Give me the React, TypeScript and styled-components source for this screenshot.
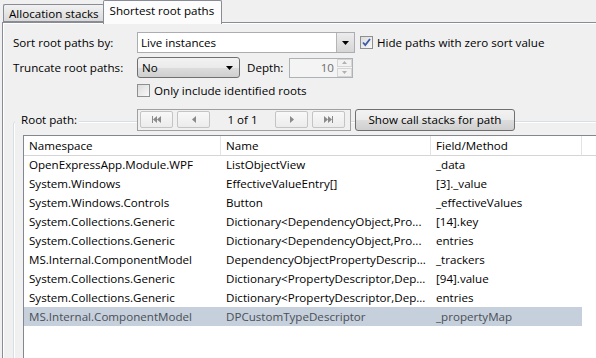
import styled, { createGlobalStyle } from "styled-components";

const GlobalStyle = createGlobalStyle`
  html, body {
    margin: 0;
    padding: 0;
    background: #f0f0f0;
  }
  body {
    font-family: "Open Sans", "Liberation Sans", sans-serif;
    font-size: 11.6px;
    color: #000;
  }
`;

const Window = styled.div`
  width: 596px;
  height: 358px;
  overflow: hidden;
  display: flex;
  flex-direction: column;
`;

const TabStrip = styled.div`
  display: flex;
  align-items: flex-end;
  height: 22px;
  padding-left: 3px;
  position: relative;
  z-index: 1;
`;

const Tab = styled.div<{ $active?: boolean }>`
  box-sizing: border-box;
  display: flex;
  align-items: center;
  border: 1px solid #898c95;
  border-radius: 2px 2px 0 0;
  white-space: nowrap;
  ${(p) =>
    p.$active
      ? `
    height: 24px;
    margin-bottom: -2px;
    margin-left: -1px;
    padding: 0 7px 4px 6px;
    border-bottom: none;
    background: #fcfcfc;
  `
      : `
    height: 18px;
    padding: 0 5px 0 5px;
    border-right: none;
    background: linear-gradient(#f2f2f2, #d9d9d9);
  `}
`;

const Panel = styled.div`
  flex: none;
  height: 360px;
  width: 640px;
  margin-left: 2px;
  border-top: 1px solid #898c95;
  border-left: 1px solid #898c95;
  box-shadow: inset 1px 1px 0 #fff;
  padding: 9px 0 0 10px;
  display: flex;
  flex-direction: column;
`;

const FormRow = styled.div<{ $top?: number }>`
  display: flex;
  align-items: center;
  margin-top: ${(p) => p.$top ?? 0}px;
`;

const Label = styled.div<{ $width?: number; $left?: number }>`
  width: ${(p) => p.$width ?? 124}px;
  margin-left: ${(p) => p.$left ?? 0}px;
  flex: none;
  white-space: nowrap;
`;

const ComboField = styled.div`
  box-sizing: border-box;
  width: 218px;
  height: 21px;
  display: flex;
  border: 1px solid #abadb3;
  background: #fff;
`;

const ComboText = styled.div`
  flex: 1;
  padding-left: 3px;
  display: flex;
  align-items: center;
`;

const ComboArrow = styled.div`
  width: 17px;
  border-left: 1px solid #b5b5b5;
  background: linear-gradient(#ececec, #d6d6d6);
  display: flex;
  align-items: center;
  justify-content: center;
`;

const ButtonCombo = styled.div`
  box-sizing: border-box;
  width: 103px;
  height: 21px;
  display: flex;
  align-items: center;
  justify-content: space-between;
  padding: 0 6px 0 4px;
  border: 1px solid #707070;
  border-radius: 3px;
  background: linear-gradient(#f2f2f2 0%, #ebebeb 50%, #dddddd 51%, #cfcfcf 100%);
`;

const CheckLabel = styled.label<{ $left?: number }>`
  display: flex;
  align-items: center;
  gap: 4px;
  margin-left: ${(p) => p.$left ?? 0}px;
  white-space: nowrap;
`;

const CheckBox = styled.span`
  box-sizing: border-box;
  width: 13px;
  height: 13px;
  border: 1px solid #8e8f8f;
  background: linear-gradient(135deg, #dcdcdc, #f8f8f8);
  display: flex;
  align-items: center;
  justify-content: center;
`;

const Spinner = styled.div`
  box-sizing: border-box;
  width: 64px;
  height: 20px;
  display: flex;
  border: 1px solid #adb2b5;
  background: #f4f4f4;
  color: #6d6d6d;
`;

const SpinValue = styled.div`
  flex: 1;
  display: flex;
  align-items: center;
  justify-content: flex-end;
  padding-right: 3px;
`;

const SpinButtons = styled.div`
  width: 15px;
  display: flex;
  flex-direction: column;
  gap: 1px;
`;

const SpinButton = styled.div`
  flex: 1;
  border: 1px solid #d5d5d5;
  background: #f2f2f2;
  display: flex;
  align-items: center;
  justify-content: center;
`;

const GroupBox = styled.div`
  margin-top: 23px;
  flex: 1;
  border: 1px solid #d5dfe5;
  border-radius: 3px;
  box-shadow: inset 1px 1px 0 #fff;
  display: flex;
  flex-direction: column;
  padding-left: 9px;
`;

const GroupHeader = styled.div`
  display: flex;
  align-items: center;
  height: 23px;
  margin-top: -14px;
  margin-left: -9px;
`;

const GroupTitle = styled.div`
  width: 123px;
  flex: none;
  span {
    background: #f0f0f0;
    padding: 0 2px 0 6px;
    margin-left: 1px;
  }
`;

const Navigator = styled.div`
  box-sizing: border-box;
  width: 214px;
  height: 22px;
  display: flex;
  align-items: center;
  padding: 0 2px;
  gap: 4px;
  border: 1px solid #a0a0a0;
  background: #f0f0f0;
`;

const NavButton = styled.div`
  box-sizing: border-box;
  width: 33px;
  height: 17px;
  border: 1px solid #c4c4c4;
  border-radius: 2px;
  background: linear-gradient(#f8f8f8, #ececec);
  display: flex;
  align-items: center;
  justify-content: center;
`;

const PageText = styled.div`
  width: 57px;
  text-align: center;
`;

const PushButton = styled.div`
  box-sizing: border-box;
  width: 160px;
  height: 22px;
  margin-left: 4px;
  display: flex;
  align-items: center;
  justify-content: center;
  border: 1px solid #707070;
  border-radius: 3px;
  background: linear-gradient(#f2f2f2 0%, #ebebeb 50%, #dddddd 51%, #cfcfcf 100%);
`;

const Table = styled.div`
  margin-top: 4px;
  flex: 1;
  border: 1px solid #828790;
  background: #fff;
  display: grid;
  grid-template-columns: 197px 210px 151px 1fr;
  grid-auto-rows: 19px;
  align-content: start;
`;

const HeaderCell = styled.div<{ $last?: boolean }>`
  height: 20px;
  box-sizing: border-box;
  display: flex;
  align-items: center;
  padding-left: 5px;
  border-bottom: 1px solid #d5d5d5;
  border-right: ${(p) => (p.$last ? "none" : "1px solid #e3e3e3")};
  margin-bottom: 1px;
`;

const Cell = styled.div<{ $selected?: boolean; $fill?: boolean }>`
  display: flex;
  align-items: center;
  padding-left: 5px;
  white-space: nowrap;
  overflow: hidden;
  background: ${(p) => (p.$selected && !p.$fill ? "#c5d0dc" : "transparent")};
  color: ${(p) => (p.$selected ? "#4a4f55" : "#000")};
`;

const DownArrow = () => (
  <svg width="7" height="4" viewBox="0 0 7 4">
    <path d="M0 0h7L3.5 4z" fill="#000" />
  </svg>
);

const Check = () => (
  <svg width="9" height="9" viewBox="0 0 9 9">
    <path d="M1 4.5l2.3 2.6L8 1" fill="none" stroke="#3b5aa8" strokeWidth="1.8" />
  </svg>
);

const Tri = ({ up }: { up?: boolean }) => (
  <svg width="5" height="3" viewBox="0 0 5 3">
    <path d={up ? "M0 3h5L2.5 0z" : "M0 0h5L2.5 3z"} fill="#b0b0b0" />
  </svg>
);

const NavIcon = ({ kind }: { kind: "first" | "prev" | "next" | "last" }) => {
  const c = "#8a8a8a";
  switch (kind) {
    case "first":
      return (
        <svg width="9" height="7" viewBox="0 0 9 7">
          <rect x="0" y="0" width="1" height="7" fill={c} />
          <path d="M1 3.5L5 0v7z M5 3.5L9 0v7z" fill={c} />
        </svg>
      );
    case "prev":
      return (
        <svg width="4" height="7" viewBox="0 0 4 7">
          <path d="M0 3.5L4 0v7z" fill={c} />
        </svg>
      );
    case "next":
      return (
        <svg width="4" height="7" viewBox="0 0 4 7">
          <path d="M4 3.5L0 0v7z" fill={c} />
        </svg>
      );
    default:
      return (
        <svg width="9" height="7" viewBox="0 0 9 7">
          <path d="M4 3.5L0 0v7z M8 3.5L4 0v7z" fill={c} />
          <rect x="8" y="0" width="1" height="7" fill={c} />
        </svg>
      );
  }
};

const rows = [
  ["OpenExpressApp.Module.WPF", "ListObjectView", "_data"],
  ["System.Windows", "EffectiveValueEntry[]", "[3]._value"],
  ["System.Windows.Controls", "Button", "_effectiveValues"],
  ["System.Collections.Generic", "Dictionary<DependencyObject,Pro...", "[14].key"],
  ["System.Collections.Generic", "Dictionary<DependencyObject,Pro...", "entries"],
  ["MS.Internal.ComponentModel", "DependencyObjectPropertyDescrip...", "_trackers"],
  ["System.Collections.Generic", "Dictionary<PropertyDescriptor,Dep...", "[94].value"],
  ["System.Collections.Generic", "Dictionary<PropertyDescriptor,Dep...", "entries"],
  ["MS.Internal.ComponentModel", "DPCustomTypeDescriptor", "_propertyMap"],
];

export default function App() {
  return (
    <Window>
      <GlobalStyle />
      <TabStrip>
        <Tab>Allocation stacks</Tab>
        <Tab $active>Shortest root paths</Tab>
      </TabStrip>
      <Panel>
        <FormRow>
          <Label>Sort root paths by:</Label>
          <ComboField>
            <ComboText>Live instances</ComboText>
            <ComboArrow>
              <DownArrow />
            </ComboArrow>
          </ComboField>
          <CheckLabel $left={5}>
            <CheckBox>
              <Check />
            </CheckBox>
            Hide paths with zero sort value
          </CheckLabel>
        </FormRow>
        <FormRow $top={4}>
          <Label>Truncate root paths:</Label>
          <ButtonCombo>
            No
            <DownArrow />
          </ButtonCombo>
          <Label $width={42} $left={7}>
            Depth:
          </Label>
          <Spinner>
            <SpinValue>10</SpinValue>
            <SpinButtons>
              <SpinButton>
                <Tri up />
              </SpinButton>
              <SpinButton>
                <Tri />
              </SpinButton>
            </SpinButtons>
          </Spinner>
        </FormRow>
        <FormRow $top={5}>
          <Label />
          <CheckLabel>
            <CheckBox />
            Only include identified roots
          </CheckLabel>
        </FormRow>
        <GroupBox>
          <GroupHeader>
            <GroupTitle>
              <span>Root path:</span>
            </GroupTitle>
            <Navigator>
              <NavButton>
                <NavIcon kind="first" />
              </NavButton>
              <NavButton>
                <NavIcon kind="prev" />
              </NavButton>
              <PageText>1 of 1</PageText>
              <NavButton>
                <NavIcon kind="next" />
              </NavButton>
              <NavButton>
                <NavIcon kind="last" />
              </NavButton>
            </Navigator>
            <PushButton>Show call stacks for path</PushButton>
          </GroupHeader>
          <Table>
            <HeaderCell>Namespace</HeaderCell>
            <HeaderCell>Name</HeaderCell>
            <HeaderCell>Field/Method</HeaderCell>
            <HeaderCell $last />
            {rows.map((r, i) => {
              const sel = i === rows.length - 1;
              return [
                ...r.map((t, j) => (
                  <Cell key={`${i}-${j}`} $selected={sel}>
                    {t}
                  </Cell>
                )),
                <Cell key={`${i}-f`} $selected={sel} $fill />,
              ];
            })}
          </Table>
        </GroupBox>
      </Panel>
    </Window>
  );
}
